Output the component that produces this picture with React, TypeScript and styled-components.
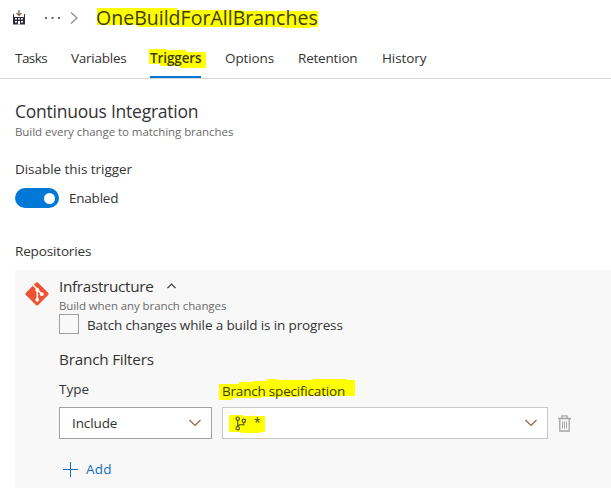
import React from "react";
import styled, { createGlobalStyle } from "styled-components";

const GlobalStyle = createGlobalStyle`
  * { box-sizing: border-box; }
  body { margin: 0; background: #fff; color: #333; font-family: "Open Sans", "Noto Sans", sans-serif; }
  svg { display: block; flex: none; }
`;

const Page = styled.div`
  width: 611px;
  height: 488px;
  overflow: hidden;
  display: flex;
  flex-direction: column;
`;

const Label = styled.span<{ $size?: number; $spacing?: number; $line?: number; $muted?: boolean }>`
  display: block;
  white-space: nowrap;
  font-size: ${(p) => p.$size ?? 13.5}px;
  letter-spacing: ${(p) => p.$spacing ?? 0}px;
  line-height: ${(p) => p.$line ?? 20}px;
  color: ${(p) => (p.$muted ? "#6b6b6b" : "inherit")};
`;

const Breadcrumb = styled.header`
  display: flex;
  align-items: center;
  height: 36px;
  padding-left: 12px;
`;

const Dots = styled.svg`margin-left: 19px;`;
const Separator = styled.svg`margin-left: 10px;`;

const Marked = styled.span`
  position: relative;
  display: block;
  color: #3d3d08;
`;

const Marker = styled.svg<{ $x: number; $y: number }>`
  position: absolute;
  left: ${(p) => p.$x}px;
  top: ${(p) => p.$y}px;
`;

const MarkedContent = styled.span`
  position: relative;
  display: flex;
`;

const TitleBox = styled.div`margin-left: 18px;`;

const Tabs = styled.nav`
  display: flex;
  height: 43px;
  padding-left: 15px;
  border-bottom: 1px solid #d6d6d6;
`;

const Tab = styled.div<{ $width: number; $active?: boolean }>`
  width: ${(p) => p.$width}px;
  height: 42px;
  margin-right: 24px;
  padding-top: 12px;
  border-bottom: 2px solid ${(p) => (p.$active ? "#0078d7" : "transparent")};
  font-weight: ${(p) => (p.$active ? 600 : 400)};
`;

const TabBar = styled.div`padding-top: 1px;`;

const Section = styled.section`
  display: flex;
  flex-direction: column;
  padding: 21px 0 0 15px;
`;

const Subtitle = styled.div`margin-top: 1px;`;

const ToggleTitle = styled.div`margin-top: 18px;`;

const ToggleRow = styled.div`
  display: flex;
  align-items: center;
  gap: 10px;
  height: 20px;
  margin-top: 9px;
`;

const Toggle = styled.div`
  display: flex;
  align-items: center;
  justify-content: flex-end;
  width: 44px;
  height: 20px;
  padding-right: 4px;
  border-radius: 10px;
  background: #0078d7;
`;

const Knob = styled.div`
  width: 11px;
  height: 11px;
  border-radius: 50%;
  background: #fff;
`;

const RepoHeading = styled.div`margin-top: 33px;`;

const Panel = styled.div`
  display: flex;
  height: 218px;
  margin-top: 9px;
  padding: 6px 0 0 9px;
  background: #f8f8f8;
`;

const GitLogo = styled.svg`margin-top: 5px;`;

const PanelBody = styled.div`
  display: flex;
  flex-direction: column;
  margin-left: 9px;
`;

const RepoName = styled.div`
  display: flex;
  align-items: center;
  gap: 14px;
  height: 20px;
  margin-bottom: 2px;
`;

const CheckRow = styled.div`
  display: flex;
  gap: 8px;
  height: 20px;
`;

const Checkbox = styled.div`
  width: 20px;
  height: 20px;
  border: 1px solid #a0a0a0;
`;

const FilterHeading = styled.div`margin-top: 15px;`;

const FieldRow = styled.div`
  display: flex;
  align-items: center;
  margin-top: 6px;
`;

const FieldLabels = styled.div`
  display: grid;
  grid-template-columns: 163px auto;
  align-items: start;
  height: 22px;
  margin-top: 10px;
`;

const LabelOffset = styled.div`padding-top: 2px;`;

const Field = styled.div<{ $width: number; $border: string }>`
  display: flex;
  align-items: center;
  justify-content: space-between;
  width: ${(p) => p.$width}px;
  height: 32px;
  margin-right: 10px;
  padding: 0 10px 0 12px;
  border: 1px solid ${(p) => p.$border};
  background: #fff;
`;

const BranchValue = styled.span`
  display: flex;
  align-items: center;
  gap: 7px;
`;

const AddButton = styled.div`
  display: flex;
  align-items: center;
  gap: 8px;
  margin: 20px 0 0 4px;
  color: #106ebe;
`;

const Chevron = () => (
  <svg width="12" height="8" viewBox="0 0 12 8" fill="none" stroke="#8d6248" strokeWidth="1.15">
    <path d="M.5 1 6 6.5 11.5 1" />
  </svg>
);

const BuildIcon = () => (
  <svg width="14" height="15" viewBox="0 0 14 15">
    <path d="M7 0v5M4.5 3 7 5.5 9.5 3" fill="none" stroke="#75604f" strokeWidth="1.2" />
    <path d="M1.5 4v10M12.5 4v10" stroke="#34334b" strokeWidth="1" />
    <path d="M1 7h12v7.5H1z" fill="#292943" />
    <path d="M3 8h2v1.5H3zM6 8h2v1.5H6zM9 8h2v1.5H9zM3 11h2v1.5H3zM6 11h2v3.5H6zM9 11h2v1.5H9z" fill="#fff" />
  </svg>
);

const tabs = [
  { name: "Tasks", width: 32, spacing: -0.55 },
  { name: "Variables", width: 55, spacing: -0.25 },
  { name: "Triggers", width: 51, spacing: -0.1, active: true },
  { name: "Options", width: 49, spacing: -0.1 },
  { name: "Retention", width: 60, spacing: -0.2 },
  { name: "History", width: 46, spacing: -0.1 },
];

export default function App() {
  return (
    <>
      <GlobalStyle />
      <Page>
        <Breadcrumb>
          <BuildIcon />
          <Dots width="15" height="2" fill="#666">
            <path d="M0 0h2v2H0zM6.5 0h2v2h-2zM13 0h2v2h-2z" />
          </Dots>
          <Separator width="8" height="12" fill="none" stroke="#858585" strokeWidth="1.1">
            <path d="M1 .5 7 6 1 11.5" />
          </Separator>
          <TitleBox>
            <Marked>
              <Marker $x={0} $y={4} width="223" height="24" fill="#ff0">
                <path d="M1 0h80v2h64v1h77v16h-7v1h-28v-1H42v-2H1z" />
              </Marker>
              <MarkedContent>
                <Label $size={19.5} $spacing={0.02} $line={28}>OneBuildForAllBranches</Label>
              </MarkedContent>
            </Marked>
          </TitleBox>
        </Breadcrumb>

        <TabBar>
          <Tabs>
            {tabs.map((tab) => (
              <Tab key={tab.name} $width={tab.width} $active={tab.active}>
                {tab.active ? (
                  <Marked>
                    <Marker $x={-1} $y={1} width="58" height="20" fill="#ff0">
                      <path d="M0 0h17v1h20v2h20v16H31v-2H11v-2H0z" />
                    </Marker>
                    <MarkedContent>
                      <Label $spacing={tab.spacing}>{tab.name}</Label>
                    </MarkedContent>
                  </Marked>
                ) : (
                  <Label $spacing={tab.spacing}>{tab.name}</Label>
                )}
              </Tab>
            ))}
          </Tabs>
        </TabBar>

        <Section>
          <Label $size={17.5} $spacing={-0.24} $line={22}>Continuous Integration</Label>
          <Subtitle>
            <Label $size={11.5} $spacing={-0.06} $line={18} $muted>Build every change to matching branches</Label>
          </Subtitle>
          <ToggleTitle>
            <Label $spacing={-0.04}>Disable this trigger</Label>
          </ToggleTitle>
          <ToggleRow>
            <Toggle><Knob /></Toggle>
            <Label $spacing={-0.22}>Enabled</Label>
          </ToggleRow>
          <RepoHeading>
            <Label $spacing={-0.15}>Repositories</Label>
          </RepoHeading>

          <Panel>
            <GitLogo width="26" height="26" viewBox="0 0 26 26">
              <path d="M11.9 1.8a1.6 1.6 0 0 1 2.2 0l10 10a1.6 1.6 0 0 1 0 2.3l-10 10a1.6 1.6 0 0 1-2.2 0l-10-10a1.6 1.6 0 0 1 0-2.3z" fill="#f05133" />
              <path d="m9.3 4.2 4 4v11M13.3 8.5l4.4 4.6" fill="none" stroke="#fff" strokeWidth="1.6" />
              <circle cx="13.2" cy="8.7" r="1.9" fill="#fff" />
              <circle cx="17.8" cy="13.2" r="1.9" fill="#fff" />
              <circle cx="13.2" cy="18.8" r="1.9" fill="#fff" />
            </GitLogo>
            <PanelBody>
              <RepoName>
                <Label $size={15.3} $spacing={-0.32}>Infrastructure</Label>
                <svg width="9" height="6" fill="none" stroke="#333" strokeWidth="1.2">
                  <path d="M.5 5.2 4.5 1l4 4.2" />
                </svg>
              </RepoName>
              <Label $size={11.5} $spacing={-0.09} $line={16} $muted>Build when any branch changes</Label>
              <CheckRow>
                <Checkbox />
                <Label $spacing={-0.13} $line={22}>Batch changes while a build is in progress</Label>
              </CheckRow>
              <FilterHeading>
                <Label $size={15.3} $spacing={-0.22}>Branch Filters</Label>
              </FilterHeading>
              <FieldLabels>
                <Label>Type</Label>
                <LabelOffset>
                  <Marked>
                    <Marker $x={-3} $y={-2} width="137" height="22" fill="#ff0">
                      <path d="M0 5h20V3h14V2h14V0h11v1h34V0h35v1h8v16H80v1H43v1H13v2H0z" />
                    </Marker>
                    <MarkedContent>
                      <Label $spacing={-0.2}>Branch specification</Label>
                    </MarkedContent>
                  </Marked>
                </LabelOffset>
              </FieldLabels>
              <FieldRow>
                <Field $width={153} $border="#a0a0a0">
                  <Label $spacing={-0.1}>Include</Label>
                  <Chevron />
                </Field>
                <Field $width={326} $border="#c8c8c8">
                  <Marked>
                    <Marker $x={-6} $y={2} width="37" height="18" fill="#ff0">
                      <path d="M0 0h14v1h22v16h-5v1H12v-1H0z" />
                    </Marker>
                    <MarkedContent>
                      <BranchValue>
                        <svg width="12" height="15" fill="none" stroke="#4b4b09" strokeWidth="1.1">
                          <circle cx="2.7" cy="2.7" r="1.7" />
                          <circle cx="8.8" cy="4.8" r="1.7" />
                          <circle cx="2.7" cy="12.2" r="1.7" />
                          <path d="M2.7 4.4v6.1M8.8 6.5v2.2H4.5L2.7 10.5" />
                        </svg>
                        <Label $size={12}>*</Label>
                      </BranchValue>
                    </MarkedContent>
                  </Marked>
                  <Chevron />
                </Field>
                <svg width="13" height="17" fill="none" stroke="#a5a5a5">
                  <path d="M0 3.5h13M4 3V.8h5V3M1.8 4v12h9.4V4" strokeWidth="1.3" />
                  <path d="M4.5 6.5v7M6.5 6.5v7M8.5 6.5v7" />
                </svg>
              </FieldRow>
              <AddButton>
                <svg width="15" height="15" stroke="#106ebe" fill="none">
                  <path d="M7.5 0v15M0 7.5h15" />
                </svg>
                <Label $spacing={0.2}>Add</Label>
              </AddButton>
            </PanelBody>
          </Panel>
        </Section>
      </Page>
    </>
  );
}
